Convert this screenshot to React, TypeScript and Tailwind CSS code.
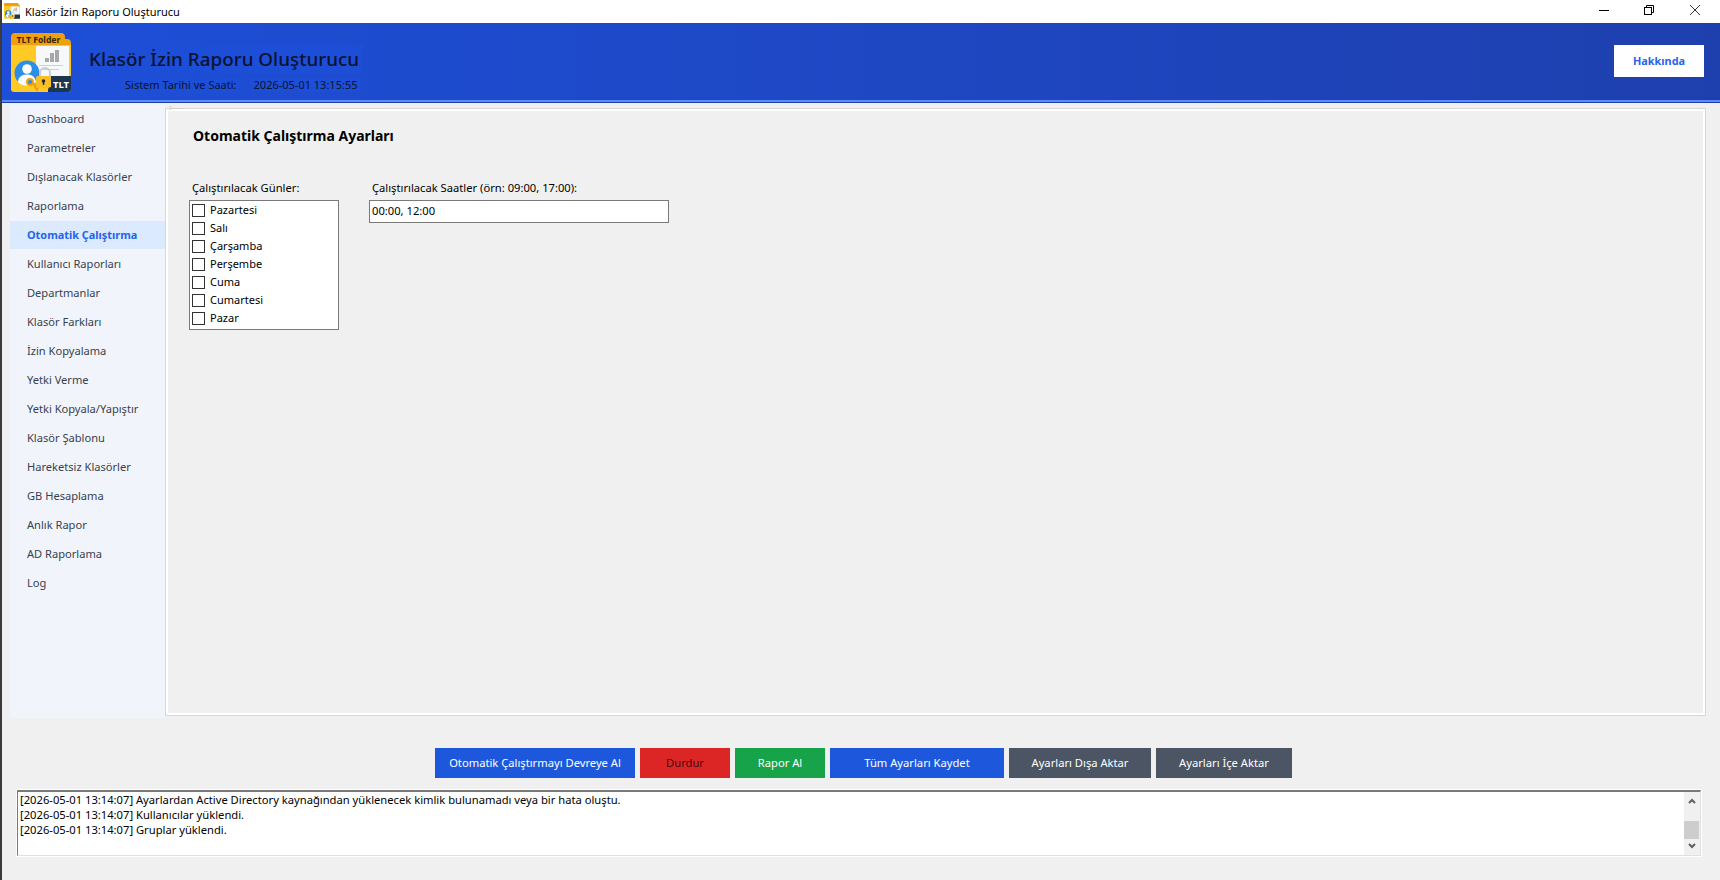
import React from "react";

const font = "font-['Noto_Sans','Open_Sans',sans-serif]";
const nav = ["Dashboard","Parametreler","Dışlanacak Klasörler","Raporlama","Otomatik Çalıştırma","Kullanıcı Raporları","Departmanlar","Klasör Farkları","İzin Kopyalama","Yetki Verme","Yetki Kopyala/Yapıştır","Klasör Şablonu","Hareketsiz Klasörler","GB Hesaplama","Anlık Rapor","AD Raporlama","Log"];
const days = ["Pazartesi","Salı","Çarşamba","Perşembe","Cuma","Cumartesi","Pazar"];
const buttons = [
  { t: "Otomatik Çalıştırmayı Devreye Al", w: "w-[200px]", c: "bg-[#1d58dc] text-white" },
  { t: "Durdur", w: "w-[90px]", c: "bg-[#dc2626] text-[#4c0a0a]" },
  { t: "Rapor Al", w: "w-[90px]", c: "bg-[#16a34a] text-white" },
  { t: "Tüm Ayarları Kaydet", w: "w-[174px]", c: "bg-[#1d58dc] text-white" },
  { t: "Ayarları Dışa Aktar", w: "w-[142px]", c: "bg-[#4b5563] text-white" },
  { t: "Ayarları İçe Aktar", w: "w-[136px]", c: "bg-[#4b5563] text-white" },
];

function Logo({ size, small }: { size: number; small?: boolean }) {
  return (
    <svg width={size} height={size} viewBox="0 0 60 60">
      <path d="M0 12V4a4 4 0 0 1 4-4h46a4 4 0 0 1 4 4v2h2a4 4 0 0 1 4 4v4H0z" fill="#f0a00e" />
      <path d="M0 12h60v44a3 3 0 0 1-3 3H3a3 3 0 0 1-3-3z" fill="#ffc926" />
      {!small && <text x="5.5" y="9.5" fontSize="8.6" fontWeight="700" fill="#33260a" fontFamily="Noto Sans, sans-serif">TLT Folder</text>}
      <rect x="25" y="13" width="33" height="40" rx="1" fill="#f7f8fa" />
      <rect x="34" y="25" width="4" height="4" fill="#a8a8a8" />
      <rect x="39" y="20" width="4" height="9" fill="#a8a8a8" />
      <rect x="44" y="17" width="4" height="12" fill="#a8a8a8" />
      <rect x="28" y="32" width="24" height="1" fill="#c9d1da" />
      <rect x="32" y="36" width="16" height="1" fill="#c9d1da" />
      <circle cx="16" cy="40" r="12.5" fill="#2b8fe8" />
      <circle cx="16" cy="36" r="4.8" fill="#fff" />
      <path d="M7 49c.6-6 5-7.5 9-7.5s8 1.500 9 7.500a12.500 12.500 0 0 1-18 0z" fill="#fff" />
      <path d="M29 44v-4a5 5 0 0 1 10 0v4" fill="none" stroke="#c5cdd6" strokeWidth="2" />
      <circle cx="19" cy="49" r="3" fill="#2b8fe8" stroke="#f0a00e" strokeWidth="2" />
      <path d="M21 50h6l1 5-2 4-2-3z" fill="#f0a00e" />
      <rect x="25" y="43" width="15" height="12" rx="2" fill="#fbbf24" />
      <circle cx="32.500" cy="48" r="1.800" fill="#1f2937" />
      <rect x="31.800" y="48" width="1.500" height="4" fill="#1f2937" />
      <path d="M40 43h20v13a3 3 0 0 1-3 3H37v-2a3 3 0 0 1 3-3z" fill="#1c3650" />
      {!small && <text x="42" y="54.500" fontSize="9.500" fontWeight="700" fill="#fff" fontFamily="Noto Sans, sans-serif">TLT</text>}
    </svg>
  );
}

export default function App() {
  return (
    <div className={`${font} w-[1720px] h-[880px] flex flex-col bg-[#f0f0f0] border-l-2 border-[#3a3a3a] text-[11.2px] overflow-hidden`}>
      <div className="h-[23px] bg-white flex items-start shrink-0 relative">
        <div className="ml-[2px] mr-[5px] mt-[3px] flex"><Logo size={16} small /></div>
        <span className="text-[11px] leading-[23px] text-black">Klasör İzin Raporu Oluşturucu</span>
        <div className="ml-auto flex items-start pt-[5px] h-full">
          <svg className="mr-[35px]" width="10" height="10" viewBox="0 0 10 10"><path d="M0 5.500h10" stroke="#000" strokeWidth="1" /></svg>
          <svg className="mr-[36px]" width="10" height="10" viewBox="0 0 10 10" fill="none" stroke="#000"><rect x="0.500" y="2.500" width="7" height="7" /><path d="M2.500 2.500v-2h7v7h-2" /></svg>
          <svg className="mr-[20px]" width="10" height="10" viewBox="0 0 10 10" stroke="#000" strokeWidth="0.800"><path d="M0 0l10 10M10 0L0 10" /></svg>
        </div>
      </div>

      <div className="h-[80px] shrink-0 bg-gradient-to-r from-[#1d4fd8] to-[#1e40af] border-b border-[#1e40af] flex items-start relative">
        <div className="ml-[9px] mt-[10px] flex"><Logo size={60} /></div>
        <div className="ml-[14px] mt-[22px] flex flex-col">
          <div className="bg-[#1d4ed8] text-[#0a1330] text-[18.85px] font-medium leading-[28px] px-[4px] w-fit">Klasör İzin Raporu Oluşturucu</div>
          <div className="flex items-center ml-[38px] mt-[5px] text-[#0a1330] text-[11px] leading-[14px]">
            <span className="bg-[#1d4ed8] px-[2px]">Sistem Tarihi ve Saati:</span>
            <span className="bg-[#1d4ed8] ml-[12px] px-[3px]">2026-05-01 13:15:55</span>
          </div>
        </div>
        <div className="ml-auto mr-[16px] mt-[22px] w-[90px] h-[32px] bg-white flex items-center justify-center text-[#2563eb] font-bold text-[10.9px]">Hakkında</div>
        <div className="absolute left-0 right-0 bottom-0 h-[2px] bg-[#5b8cf5]" />
      </div>

      <div className="flex h-[615px] shrink-0 pl-[8px] pt-[1px]">
        <div className="w-[155px] bg-[#f1f5fb] shrink-0 text-[11.1px]">
          {nav.map((n, i) => (
            <div key={n} className={`h-[29px] flex items-center pl-[17px] border-t border-[#f1f5fb] ${i === 4 ? "bg-[#dbeafe] text-[#2563eb] font-bold text-[10.9px]" : "text-[#374151]"}`}>{n}</div>
          ))}
        </div>
        <div className="w-[1541px] mt-[4px] h-[608px] border border-[#d8d8d8] relative">
          <div className="absolute left-[3px] -top-[3px] w-[3px] h-[4px] bg-[#e8dfc8]" />
          <div className="absolute left-[6px] -top-[1px] w-[12px] h-[1px] bg-[#cfcfcf]" />
          <div className="h-full border-2 border-white pl-[21px] pt-[13px]">
            <div className="ml-[4px] text-[14px] font-bold text-black leading-[24px]">Otomatik Çalıştırma Ayarları</div>
            <div className="flex mt-[31px]">
              <div className="w-[150px] mr-[30px]">
                <div className="ml-[3px] h-[18px] leading-[18px] text-black">Çalıştırılacak Günler:</div>
                <div className="w-[150px] h-[130px] mt-[3px] bg-white border border-[#7a7a7a] pl-[2px] text-[11px]">
                  {days.map((d) => (
                    <div key={d} className="h-[18px] flex items-center">
                      <span className="w-[13px] h-[13px] border border-[#333] bg-white mr-[5px]" />
                      <span className="text-black">{d}</span>
                    </div>
                  ))}
                </div>
              </div>
              <div>
                <div className="ml-[3px] h-[18px] leading-[18px] text-black">Çalıştırılacak Saatler (örn: 09:00, 17:00):</div>
                <div className="w-[300px] h-[23px] mt-[3px] bg-white border border-[#7a7a7a] pl-[2px] flex items-center text-black">00:00, 12:00</div>
              </div>
            </div>
          </div>
        </div>
      </div>

      <div className="flex justify-start gap-[5px] ml-[433px] mt-[30px] h-[30px] shrink-0">
        {buttons.map((b) => (
          <div key={b.t} className={`${b.w} ${b.c} flex items-center justify-center`}>{b.t}</div>
        ))}
      </div>

      <div className="ml-[15px] mt-[12px] w-[1684px] h-[66px] bg-white border-t-2 border-l border-r border-b border-t-[#7a7a7a] border-l-[#7a7a7a] border-r-[#e0e0e0] border-b-[#e0e0e0] flex shrink-0 outline outline-1 outline-white">
        <div className="flex-1 pl-[2px] text-black leading-[15px]">
          <div>[2026-05-01 13:14:07] Ayarlardan Active Directory kaynağından yüklenecek kimlik bulunamadı veya bir hata oluştu.</div>
          <div>[2026-05-01 13:14:07] Kullanıcılar yüklendi.</div>
          <div>[2026-05-01 13:14:07] Gruplar yüklendi.</div>
        </div>
        <div className="w-[16px] bg-[#f0f0f0] flex flex-col items-center justify-between py-[6px] relative">
          <svg width="8" height="6" viewBox="0 0 8 6" fill="none" stroke="#606060" strokeWidth="2"><path d="M1 5l3-3 3 3" /></svg>
          <div className="absolute left-0 top-[29px] w-[15px] h-[18px] bg-[#cdcdcd]" />
          <svg width="8" height="6" viewBox="0 0 8 6" fill="none" stroke="#606060" strokeWidth="2"><path d="M1 1l3 3 3-3" /></svg>
        </div>
      </div>
    </div>
  );
}
